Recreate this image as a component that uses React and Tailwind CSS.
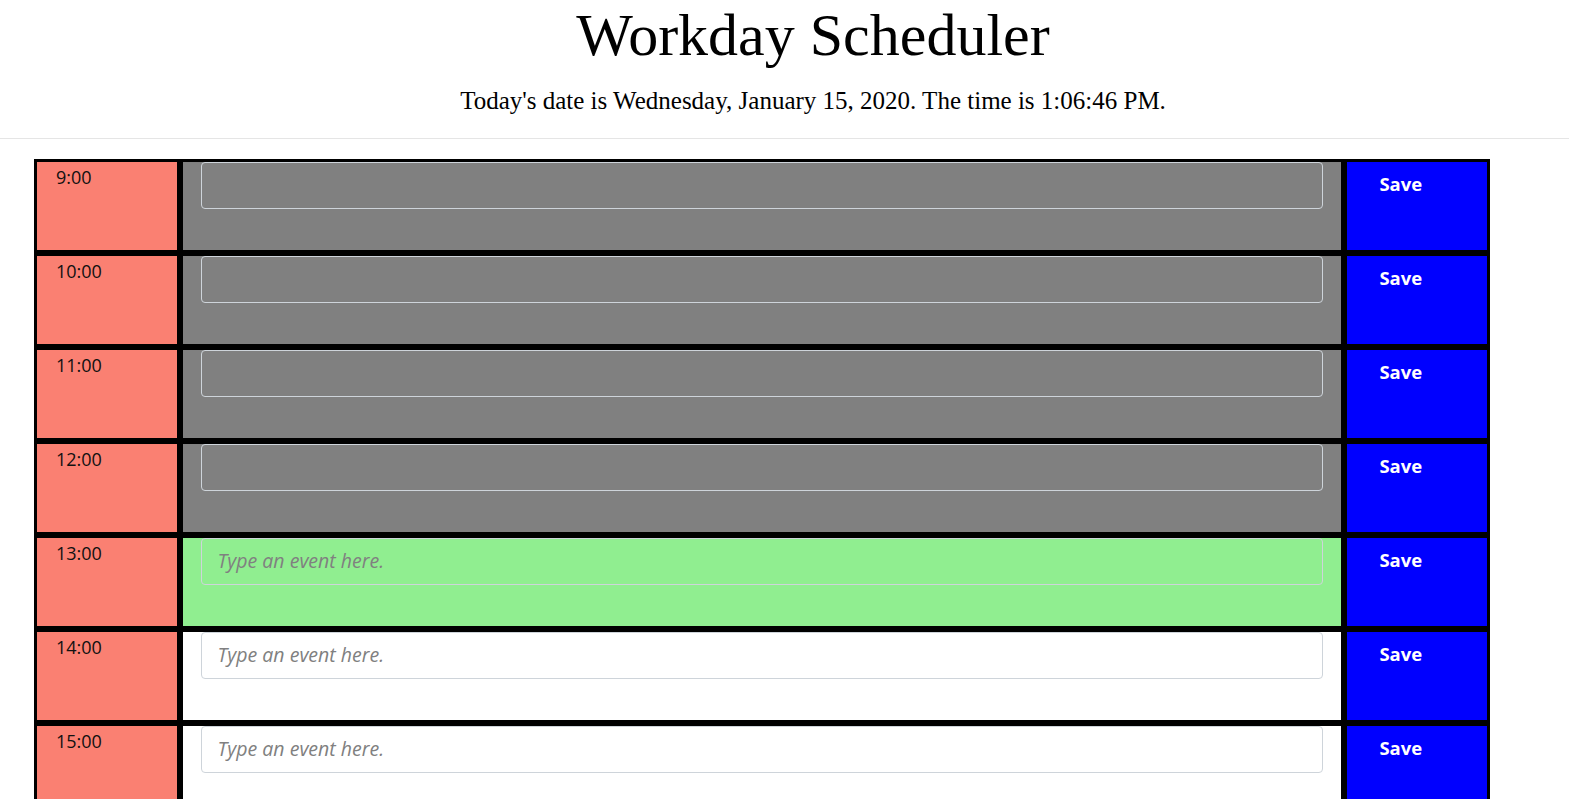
import React, { useState } from 'react';

const hours = [9, 10, 11, 12, 13, 14, 15, 16, 17];
const currentHour = 13;

const rowBg = (hour) => {
  if (hour < currentHour) return 'bg-[#808080]';
  if (hour === currentHour) return 'bg-[#90ee90]';
  return 'bg-white';
};

const TimeBlock = ({ hour, value, onChange }) => {
  return (
    <div className="flex h-[94px]">
      <div className="w-[10%] border-[3px] border-black bg-[#fa8072] pl-[19px] pt-[2px] text-[18px] leading-[27px] text-[#111]">
        {hour}:00
      </div>
      <div className={`w-[80%] border-[3px] border-black ${rowBg(hour)} px-[18px]`}>
        <textarea
          value={value}
          onChange={(e) => onChange(hour, e.target.value)}
          placeholder={hour >= currentHour ? 'Type an event here.' : ''}
          className="block h-[47px] w-full resize-none rounded-[4px] border border-[#ced4da] bg-transparent pl-[16px] pt-[8px] text-[19.5px] leading-[28px] text-[#495057] outline-none placeholder:italic placeholder:text-[#808080]"
        />
      </div>
      <button className="flex w-[10%] items-start border-[3px] border-black bg-[#0000ff] pl-[32px] pt-[8px] text-left text-[18.5px] font-bold leading-[28px] text-white">
        Save
      </button>
    </div>
  );
};

const App = () => {
  const [events, setEvents] = useState({});

  const handleChange = (hour, text) => {
    setEvents(prev => ({ ...prev, [hour]: text }));
  };

  return (
    <div className="h-screen overflow-hidden bg-white" style={{ fontFamily: '"Open Sans", sans-serif' }}>
      <header className="border-b border-[#e5e5e5] pl-[57px] pt-[7px] pb-[19px] text-center text-black font-['Liberation_Serif',serif]">
        <h1 className="text-[60px] leading-[56px]">Workday Scheduler</h1>
        <p className="mt-[20px] text-[25px] leading-[36px]">
          Today's date is Wednesday, January 15, 2020. The time is 1:06:46 PM.
        </p>
      </header>

      <div className="ml-[34px] mt-[20px] w-[1456px]">
        {hours.map(hour => (
          <TimeBlock key={hour} hour={hour} value={events[hour] || ''} onChange={handleChange} />
        ))}
      </div>
    </div>
  );
};

export default App;
